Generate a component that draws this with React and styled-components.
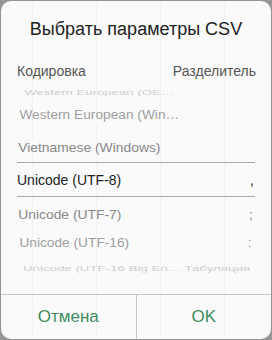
import React from 'react'
import styled, { createGlobalStyle } from 'styled-components'

const GlobalStyle = createGlobalStyle`
  html, body {
    margin: 0;
    padding: 0;
    background: #959595;
    font-family: "Liberation Sans", Arial, sans-serif;
  }
  * { box-sizing: border-box; }
`

const encodings = [
  { name: 'Western European (OEM-Latin)', sep: '', h: 14, sx: 0.94, sy: 0.5, color: '#cdcdcd' },
  { name: 'Western European (Windows)', sep: '', h: 32, sx: 0.98, sy: 0.86, color: '#a0a0a0' },
  { name: 'Vietnamese (Windows)', sep: '', h: 31, sx: 0.99, sy: 0.96, color: '#888888' },
  { name: 'Unicode (UTF-8)', sep: ',', h: 35, sx: 1, sy: 1, color: '#222222', selected: true },
  { name: 'Unicode (UTF-7)', sep: ';', h: 34, sx: 0.99, sy: 0.96, color: '#888888' },
  { name: 'Unicode (UTF-16)', sep: ':', h: 24, sx: 0.98, sy: 0.86, color: '#a0a0a0' },
  { name: 'Unicode (UTF-16 Big Endian)', sep: 'Табуляция', h: 26, sx: 0.95, sy: 0.55, color: '#cdcdcd' },
]

const Page = styled.div`
  width: 272px;
  height: 340px;
  padding: 1px;
`

const Dialog = styled.div`
  height: 338px;
  border-radius: 10px;
  overflow: hidden;
  display: flex;
  flex-direction: column;
  background-color: #fafafa;
  background-image:
    repeating-linear-gradient(90deg, transparent 0 31px, rgba(0,0,0,0.03) 31px 32px, transparent 32px 64px);
`

const Title = styled.div`
  height: 56px;
  line-height: 56px;
  text-align: center;
  font-size: 18px;
  color: #222;
`

const Header = styled.div`
  height: 28px;
  padding: 0 15px 0 16px;
  display: flex;
  align-items: center;
  justify-content: space-between;
  font-size: 14px;
  color: #555;
`

const Wheel = styled.div`
  flex: 1;
  padding: 0 16px;
  display: flex;
  flex-direction: column;
  overflow: hidden;
`

const Row = styled.div`
  flex: none;
  height: ${p => p.$h}px;
  display: flex;
  align-items: center;
  font-size: 14px;
  color: ${p => p.$color};
  border-top: ${p => (p.$selected ? '1px solid #a9a9a9' : 'none')};
  border-bottom: ${p => (p.$selected ? '1px solid #a9a9a9' : 'none')};
`

const Inner = styled.div`
  width: 100%;
  display: flex;
  align-items: center;
  justify-content: space-between;
  transform: scale(${p => p.$sx}, ${p => p.$sy});
  transform-origin: center;
`

const Name = styled.span`
  flex: none;
  width: 170px;
  white-space: nowrap;
  overflow: hidden;
  text-overflow: ellipsis;
`

const Sep = styled.span`
  flex: none;
  white-space: nowrap;
  padding-right: ${p => (p.$short ? '1px' : '0')};
`

const Footer = styled.div`
  height: 45px;
  flex: none;
  display: flex;
  border-top: 1px solid #c6c6c6;
`

const Button = styled.button`
  flex: 1;
  border: none;
  background: transparent;
  font-family: inherit;
  font-size: 17px;
  color: #3e8c5e;
  padding: 0;
  cursor: pointer;
  & + & {
    border-left: 1px solid #c6c6c6;
  }
`

export default function App() {
  return (
    <Page>
      <GlobalStyle />
      <Dialog>
        <Title>Выбрать параметры CSV</Title>
        <Header>
          <span>Кодировка</span>
          <span>Разделитель</span>
        </Header>
        <Wheel>
          {encodings.map(e => (
            <Row key={e.name} $h={e.h} $color={e.color} $selected={e.selected}>
              <Inner $sx={e.sx} $sy={e.sy}>
                <Name>{e.name}</Name>
                <Sep $short={e.sep.length === 1}>{e.sep}</Sep>
              </Inner>
            </Row>
          ))}
        </Wheel>
        <Footer>
          <Button>Отмена</Button>
          <Button>OK</Button>
        </Footer>
      </Dialog>
    </Page>
  )
}
